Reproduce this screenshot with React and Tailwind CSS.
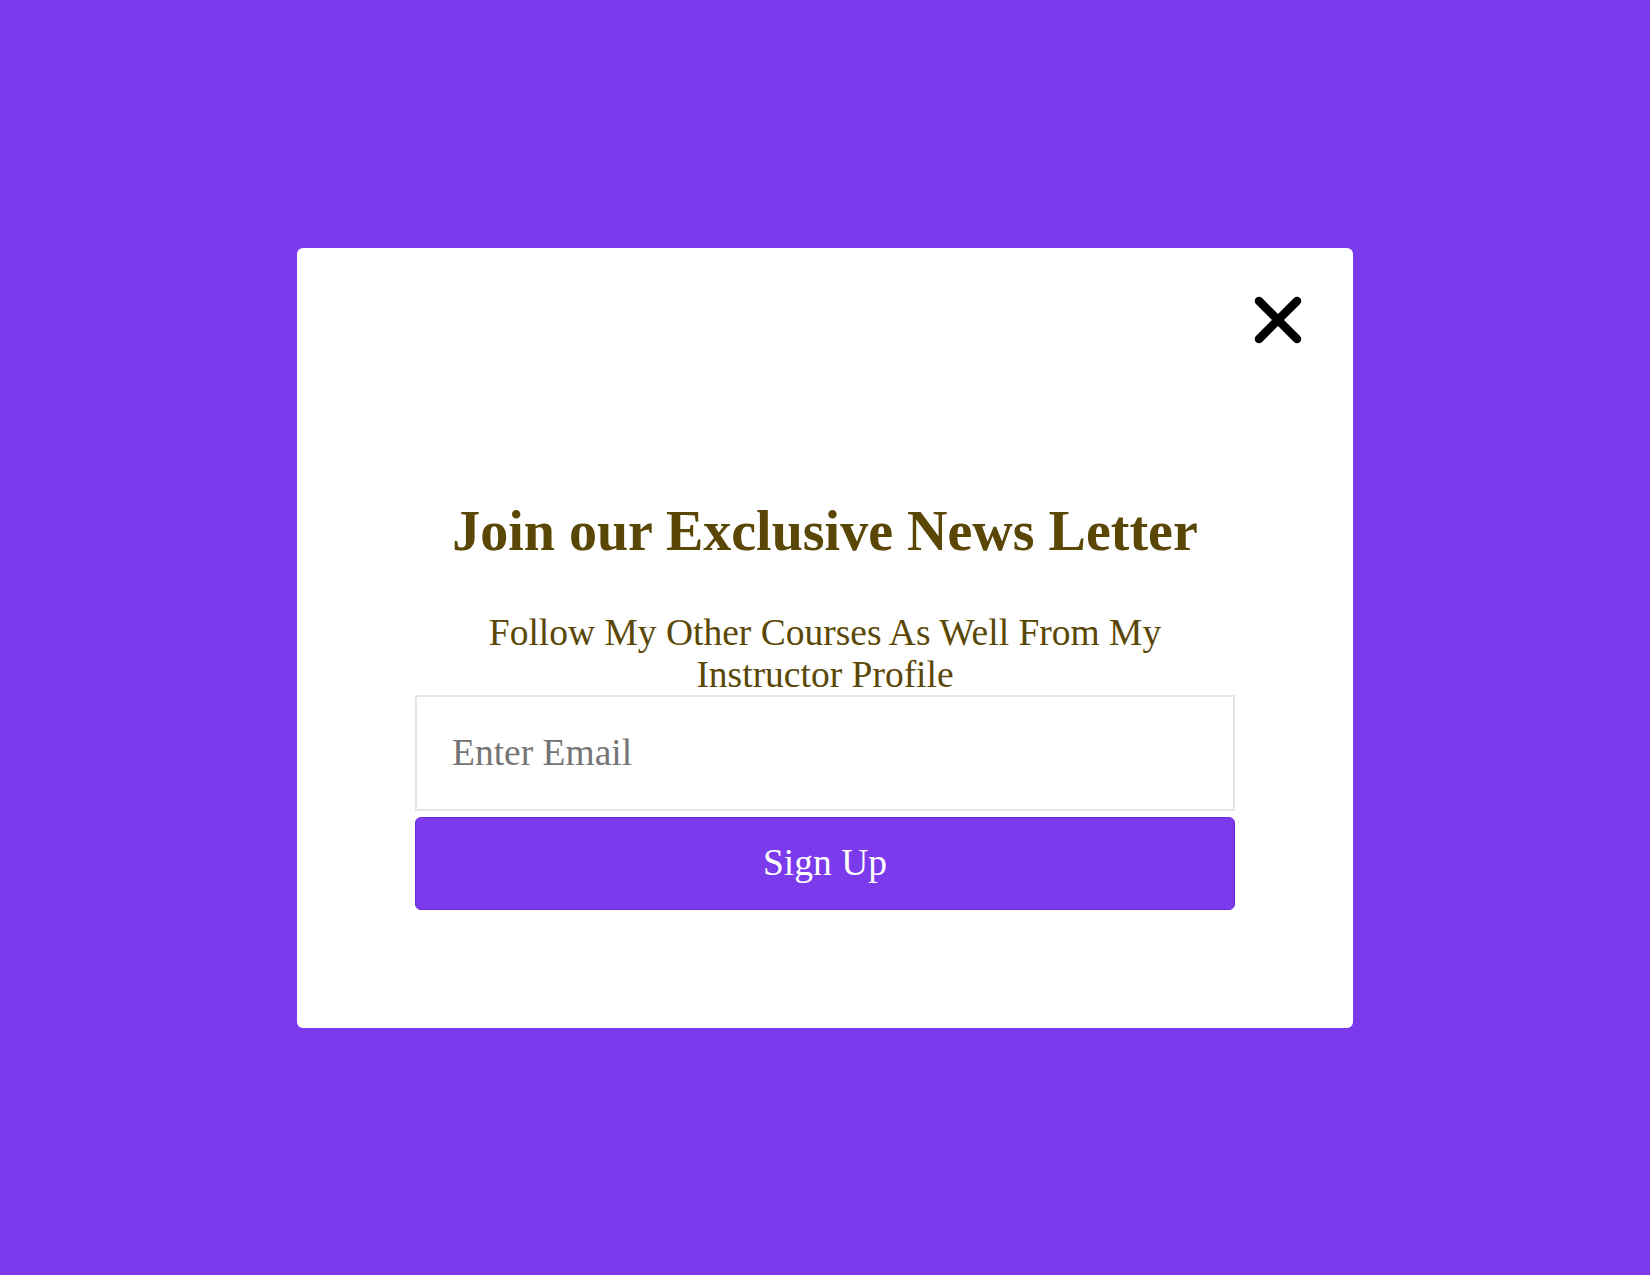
export default function App() {
  return (
    <div className="min-h-screen w-full bg-[#7c3aed] flex items-center justify-center font-['Liberation_Serif','Times_New_Roman',serif]">
      <div className="w-[1056px] h-[780px] bg-white rounded-[6px] flex flex-col items-center">
        <div className="w-full flex justify-end pt-[48px] pr-[51px]">
          <button className="w-[48px] h-[48px]" aria-label="Close">
            <svg viewBox="0 0 48 48" className="w-full h-full">
              <path d="M5 5 L43 43 M43 5 L5 43" stroke="#000" strokeWidth="8.5" strokeLinecap="round" fill="none" />
            </svg>
          </button>
        </div>
        <h2 className="mt-[155px] text-[56px] leading-[64px] font-bold text-[#5b4705]">
          Join our Exclusive News Letter
        </h2>
        <p className="mt-[49px] w-[820px] text-center text-[37.5px] leading-[42px] text-[#5b4705]">
          Follow My Other Courses As Well From My Instructor Profile
        </p>
        <input
          type="email"
          placeholder="Enter Email"
          className="mt-[-1px] w-[820px] h-[116px] border-2 border-[#e5e5e5] px-[35px] text-[37.5px] placeholder:text-[#757575] outline-none"
        />
        <button className="mt-[6px] w-[820px] h-[93px] rounded-[6px] bg-[#7c3aed] border border-[#6d28d9] text-white text-[37.5px]">
          Sign Up
        </button>
      </div>
    </div>
  );
}
